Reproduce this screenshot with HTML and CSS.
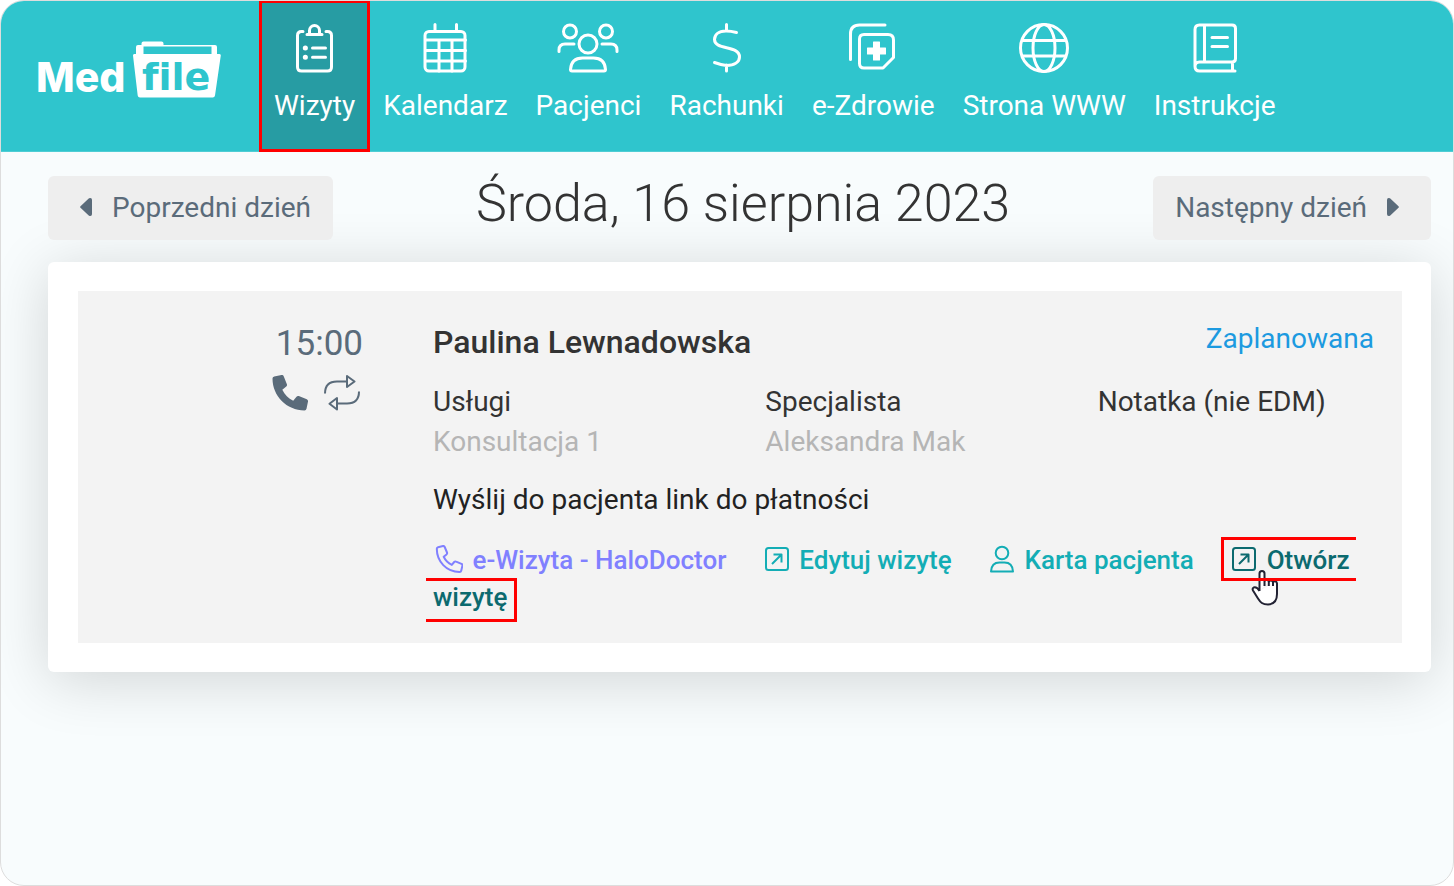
FILE: index.html
```html
<!DOCTYPE html>
<html lang="pl">
<head>
<meta charset="utf-8">
<title>MedFile – Wizyty</title>
<link rel="stylesheet" href="styles.css">
</head>
<body>
<div class="app">
  <header class="topbar">
    <a class="logo" href="#" aria-label="MedFile">
      <svg width="190" height="60" viewBox="32 40 190 60">
        <text class="logo-med" x="36" y="92">Med</text>
        <path fill="#fff" d="M136 54V47q0-2 2-2h3.500v-1.500q0-2 2-2h18q2 0 2 2V45H215q2 0 2 2v7h2.500q1.500 0 1.300 1.500L215 95.500q-.3 2-2.300 2H140q-2 0-2.300-2L133 55.500q-.2-1.500 1.300-1.500z"/>
        <path fill="#2fc5cd" d="M143.500 46.500h68V54h-68z"/>
        <text class="logo-file" x="142" y="90">file</text>
      </svg>
    </a>
    <nav class="nav">
      <a class="nav-item active" href="#">
        <svg class="nav-icon" width="40" height="50" viewBox="295 23 40 50">
          <path d="M303 31.500h-1.500q-4 0-4 4V67q0 4 4 4h26q4 0 4-4V35.500q0-4-4-4H326M307 34.500h15"/><path d="M309.500 34v-3.500a5 5 0 0 1 10 0V34"/><path d="M312.500 48H325.500M312.500 57.300H325.500"/><path class="thick" d="M305.300 48h.1M305.300 57.300h.1"/>
        </svg>
        <span>Wizyty</span>
      </a>
      <a class="nav-item" href="#">
        <svg class="nav-icon" width="44" height="50" viewBox="423 23 44 50">
          <rect x="425" y="31.500" width="40" height="39.500" rx="4"/><path d="M435 24.500v6M456.500 24.500v6M425.500 40h40M425.500 50.500h40M425.500 61h40M439 41v30M452 41v30"/>
        </svg>
        <span>Kalendarz</span>
      </a>
      <a class="nav-item" href="#">
        <svg class="nav-icon" width="62" height="50" viewBox="558 23 62 50">
          <circle cx="571" cy="31.500" r="6.500"/><circle cx="607" cy="31.500" r="6.500"/><circle cx="589" cy="44" r="9"/><path d="M560 51.500v-1.500q0-6 6-6h9M618 51.500v-1.500q0-6-6-6h-9M573 71h32q1.500 0 1.500-1.500C606 62 601.500 58 594.500 58h-11C576.500 58 572 62 571.500 69.500q0 1.500 1.500 1.500z"/>
        </svg>
        <span>Pacjenci</span>
      </a>
      <a class="nav-item" href="#">
        <svg class="nav-icon" width="32" height="50" viewBox="711 23 32 50">
          <path d="M726.500 24.500v6M726.500 65v6M736.500 32.500Q731 31 726 31C718 31 714.500 35 714.500 39.500c0 11 25 5.500 25 17.500 0 5-5 8.500-13 8.500q-5-.5-12-3"/>
        </svg>
        <span>Rachunki</span>
      </a>
      <a class="nav-item" href="#">
        <svg class="nav-icon" width="48" height="50" viewBox="849 23 48 50">
          <path d="M850.500 59.500V34q0-9 9-9H885M864 34.500h24q5.500 0 5.500 5.500v17.500L883 68H864q-4.500 0-4.500-4.500V39q0-4.500 4.500-4.500z"/><path fill="#fff" stroke="none" d="M873.500 41.500h6q.5 0 .5.500v5.500h5.500q.5 0 .5.500v6q0 .5-.5.500H880V60q0 .5-.5.500h-6q-.5 0-.5-.5v-5.500h-5.500q-.5 0-.5-.5v-6q0-.5.5-.5h5.500V42q0-.5.500-.500z"/>
        </svg>
        <span>e-Zdrowie</span>
      </a>
      <a class="nav-item" href="#">
        <svg class="nav-icon" width="50" height="50" viewBox="1019 23 50 50">
          <circle cx="1044" cy="48" r="23.500"/><ellipse cx="1044" cy="48" rx="11" ry="23.500"/><path d="M1022.500 40.500h43M1022.500 56h43"/>
        </svg>
        <span>Strona WWW</span>
      </a>
      <a class="nav-item" href="#">
        <svg class="nav-icon" width="44" height="50" viewBox="1192 23 44 50">
          <path d="M1198.500 25H1231q3.500 0 3.500 3.500v30q0 3.500-3.500 3.500h-32.500q-4.500 0-4.500 4.500t4.500 4.500H1234M1194 66V29.500q0-4.500 4.500-4.500M1203.500 25v37M1231.500 62v9M1211 37.500h15.500M1211 46.500h15.500"/>
        </svg>
        <span>Instrukcje</span>
      </a>
    </nav>
  </header>

  <main class="content">
    <div class="daybar">
      <button class="day-btn prev" type="button">
        <svg width="12" height="20" viewBox="0 0 12 20"><path fill="currentColor" d="M.5 9.200 9 1.200Q12 .2 12 3v14q0 2.800-3 1.800L.5 10.800q-.8-.8 0-1.600z"/></svg>
        Poprzedni dzień
      </button>
      <h1 class="day-title">Środa, 16 sierpnia 2023</h1>
      <button class="day-btn next" type="button">
        Następny dzień
        <svg width="12" height="20" viewBox="0 0 12 20"><path fill="currentColor" d="M11.500 9.200 3 1.200Q0 .2 0 3v14q0 2.800 3 1.800l8.500-8q.8-.8 0-1.600z"/></svg>
      </button>
    </div>

    <section class="card">
      <article class="visit">
        <div class="visit-time">
          <time datetime="2023-08-16T15:00">15:00</time>
          <div class="visit-icons">
            <svg width="36" height="36" viewBox="0 0 36 36"><path fill="currentColor" d="M2.200 1.500 9.500 0q1.500-.2 2.200 1.200l3.200 8q.5 1.300-.6 2.300l-4 3.300c2.500 5 6 8.500 10.900 10.900l3.300-4q1-1.100 2.300-.6l8 3.200q1.400.7 1.200 2.200l-1.500 7.300q-.4 1.600-2 1.600C14.600 35.400.5 21 .5 3.500q0-1.600 1.700-2z"/></svg>
            <svg width="38" height="36" viewBox="0 0 38 36" fill="none" stroke="currentColor" stroke-width="2" stroke-linejoin="round"><path d="M2 18.500Q2 6.500 14 6.500h10M24 1v11l7.500-5.500zM36 16.500q0 12-12 12H14M14 23v11.500L6.500 28.800z"/></svg>
          </div>
        </div>
        <div class="visit-body">
          <div class="visit-head">
            <h2 class="patient">Paulina Lewnadowska</h2>
            <span class="status">Zaplanowana</span>
          </div>
          <dl class="facts">
            <div><dt>Usługi</dt><dd>Konsultacja 1</dd></div>
            <div><dt>Specjalista</dt><dd>Aleksandra Mak</dd></div>
            <div><dt>Notatka (nie EDM)</dt></div>
          </dl>
          <p class="payment">Wyślij do pacjenta link do płatności</p>
          <div class="actions">
            <a class="action call" href="#"><svg width="30" height="28" viewBox="1 0 30 28"><path d="M6 2.200 11 1q1.200-.2 1.700 1l2.300 5.500q.4 1-.5 1.900l-2.800 2.300q2.700 5.600 8.100 8.200l2.400-2.900q.8-.9 1.900-.4l5.400 2.300q1.200.6.900 1.800l-1.200 5q-.3 1.300-1.700 1.300C14.500 27 4.800 16.500 4.800 3.800q0-1.300 1.200-1.600z"/></svg> e-Wizyta - HaloDoctor</a>
            <a class="action" href="#"><svg width="26" height="28" viewBox="0 0 26 28"><rect x="2" y="3" width="22" height="22" rx="2.500"/><path d="M8 19l9.500-9.500M9.500 9.500h8v8"/></svg> Edytuj wizytę</a>
            <a class="action" href="#"><svg width="26" height="28" viewBox="0 0 26 28"><circle cx="13" cy="8" r="6.300"/><path d="M2 26.500q.5-9 8.500-9h5q8 0 8.500 9z"/></svg> Karta pacjenta</a>
            <a class="action hovered" href="#"><span class="mark mark-start"><svg width="26" height="28" viewBox="0 0 26 28"><rect x="2" y="3" width="22" height="22" rx="2.500"/><path d="M8 19l9.500-9.500M9.500 9.500h8v8"/></svg> Otwórz<svg class="pointer" width="28" height="36" viewBox="0 0 28 36"><path d="M8.500 21V3.500Q8.500 1 11 1t2.500 2.500V16M13.500 12q0-2.500 2-2.500t2.300 2.500V16M17.800 12.500q0-2 2-2t2.200 2V16M22 13q0-1.700 1.800-1.700T26 13.500V24q0 10-9 10.500c-5.500 0-7.500-2-10-6l-5-8q-1-2 .7-3 3-1 5.800 3.500"/></svg></span> <span class="mark mark-end">wizytę</span></a>
          </div>
        </div>
      </article>
    </section>
  </main>
</div>
</body>
</html>
```

FILE: styles.css
```css
* { box-sizing: border-box; }

body {
  margin: 0;
  background: #fff;
  color: #333;
  font-family: Roboto, "Liberation Sans", sans-serif;
  font-size: 28px;
}

a { text-decoration: none; }

.app {
  min-height: 100vh;
  border: 1px solid #ddd;
  border-radius: 24px;
  background: #f8fcfd;
  overflow: hidden;
}

.topbar {
  display: flex;
  border-bottom: 1px solid #4fcdd4;
  background: #2fc5cd;
}

.logo {
  flex: none;
  margin: 39px 38px 0 31px;
}

.logo svg { display: block; }

.logo-med {
  fill: #fff;
  font-family: Inter, sans-serif;
  font-size: 41px;
  font-weight: 800;
}

.logo-file {
  fill: #2fc5cd;
  font-family: "DejaVu Sans", sans-serif;
  font-size: 38px;
  font-variant-ligatures: none;
  font-weight: 700;
}

.nav { display: flex; }

.nav-item {
  padding: 22px 14px 28px;
  color: #fff;
  line-height: 34px;
  text-align: center;
  white-space: nowrap;
}

.nav-item.active {
  background: #279ca3;
  outline: 3px solid #f00;
  outline-offset: -2px;
}

.nav-icon {
  display: block;
  margin: 0 auto 16px;
  fill: none;
  stroke: #fff;
  stroke-width: 3;
  stroke-linecap: round;
  stroke-linejoin: round;
}

.nav-icon .thick { stroke-width: 5; }

.content { padding: 24px 22px 40px 47px; }

.daybar {
  display: flex;
  justify-content: space-between;
  align-items: flex-start;
  margin-bottom: 22px;
}

.day-btn {
  display: flex;
  align-items: center;
  gap: 20px;
  height: 64px;
  border: 0;
  border-radius: 6px;
  background: #eee;
  color: #5a6b7a;
  font: inherit;
}

.prev { padding: 0 22px 2px 32px; }
.next { padding: 0 32px 2px 22px; }

.day-title {
  margin: 0;
  font-size: 52px;
  font-weight: 300;
  line-height: 56px;
}

.card {
  padding: 29px 29px 29px 30px;
  border-radius: 6px;
  background: #fff;
  box-shadow: 0 8px 60px rgba(0, 0, 0, 0.16);
}

.visit {
  display: flex;
  gap: 70px;
  padding: 32px 28px 27px 0;
  background: #f3f3f3;
}

.visit-time {
  flex: 0 0 285px;
  color: #5a6b7a;
  font-size: 35px;
  line-height: 42px;
  text-align: right;
}

.visit-icons {
  display: flex;
  justify-content: flex-end;
  gap: 15px;
  margin: 10px 2px 0 0;
}

.visit-body { flex: 1; }

.visit-head {
  display: flex;
  justify-content: space-between;
  line-height: 38px;
}

.patient {
  margin: 0;
  font-size: 32px;
  font-weight: 500;
}

.status {
  color: #1c9ae0;
  line-height: 32px;
}

.facts {
  display: grid;
  grid-template-columns: repeat(3, 1fr);
  gap: 56px;
  margin: 21px 0 18px;
  line-height: 40px;
}

.facts dt { white-space: nowrap; }

.facts dd {
  margin: 0;
  color: #b5b5b5;
}

.payment {
  margin: 0 0 22px;
  color: #222;
  line-height: 40px;
}

.actions {
  font-size: 26px;
  font-weight: 500;
  line-height: 37px;
}

.action {
  margin-right: 31px;
  color: #13adb5;
}

.action svg {
  margin-right: 3px;
  vertical-align: -4px;
  fill: none;
  stroke: currentColor;
  stroke-width: 2;
  stroke-linejoin: round;
}

.action.call { color: #8080ff; }

.action.hovered {
  margin-right: 0;
  color: #0c6a6f;
}

.mark { position: relative; }

.mark::after {
  content: "";
  position: absolute;
  border: 3px solid #f00;
}

.mark-start::after {
  inset: -8px -6px -6px -10px;
  border-right: 0;
}

.mark-end::after {
  inset: -4px -10px -10px -7px;
  border-left: 0;
}

.action .pointer {
  position: absolute;
  left: 20px;
  top: 25px;
  margin: 0;
  fill: #fff;
  stroke: #223;
  stroke-width: 2;
}
```
